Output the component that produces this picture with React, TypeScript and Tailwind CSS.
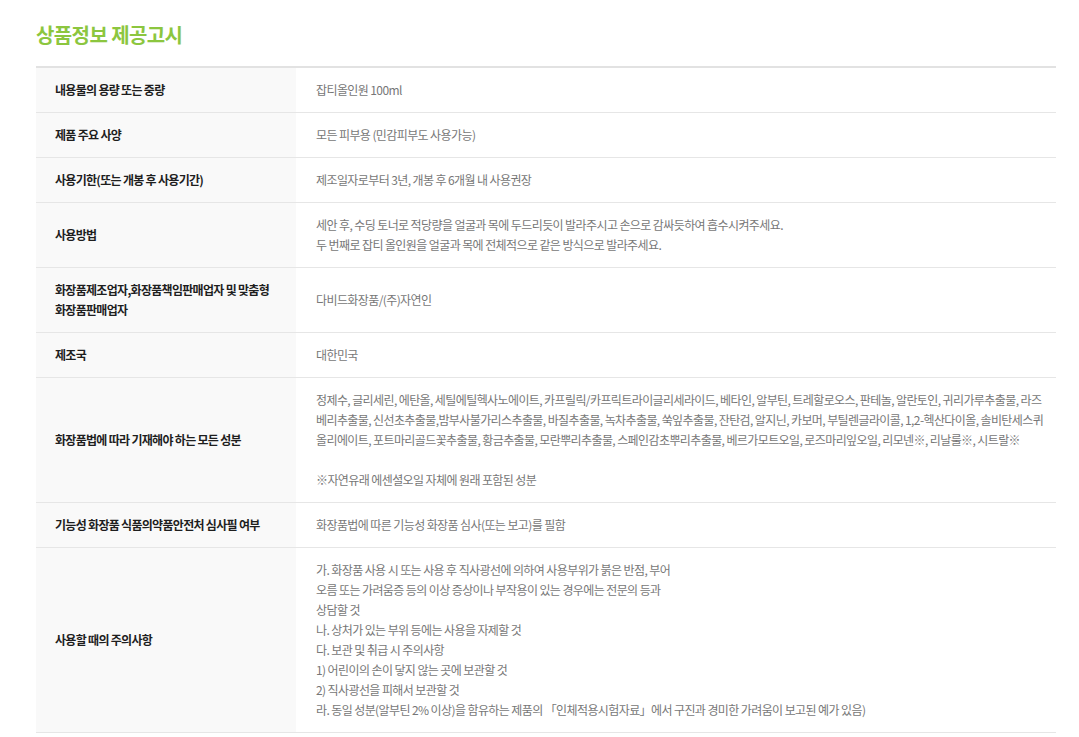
import type { ReactNode } from "react";

type Row = { label: ReactNode; value: ReactNode };

const rows: Row[] = [
  { label: "내용물의 용량 또는 중량", value: "잡티올인원 100ml" },
  { label: "제품 주요 사양", value: "모든 피부용 (민감피부도 사용가능)" },
  { label: "사용기한(또는 개봉 후 사용기간)", value: "제조일자로부터 3년, 개봉 후 6개월 내 사용권장" },
  {
    label: "사용방법",
    value: (
      <>
        세안 후, 수딩 토너로 적당량을 얼굴과 목에 두드리듯이 발라주시고 손으로 감싸듯하여 흡수시켜주세요.
        <br />
        두 번째로 잡티 올인원을 얼굴과 목에 전체적으로 같은 방식으로 발라주세요.
      </>
    ),
  },
  {
    label: (
      <>
        화장품제조업자,화장품책임판매업자 및 맞춤형
        <br />
        화장품판매업자
      </>
    ),
    value: "다비드화장품/(주)자연인",
  },
  { label: "제조국", value: "대한민국" },
  {
    label: "화장품법에 따라 기재해야 하는 모든 성분",
    value: (
      <>
        정제수, 글리세린, 에탄올, 세틸에틸헥사노에이트, 카프릴릭/카프릭트라이글리세라이드, 베타인, 알부틴, 트레할로오스, 판테놀, 알란토인, 귀리가루추출물, 라즈
        <br />
        베리추출물, 신선초추출물,밤부사불가리스추출물, 바질추출물, 녹차추출물, 쑥잎추출물, 잔탄검, 알지닌, 카보머, 부틸렌글라이콜, 1,2-헥산다이올, 솔비탄세스퀴
        <br />
        올리에이트, 포트마리골드꽃추출물, 황금추출물, 모란뿌리추출물, 스페인감초뿌리추출물, 베르가모트오일, 로즈마리잎오일, 리모넨※, 리날룰※, 시트랄※
        <br />
        <br />
        ※자연유래 에센셜오일 자체에 원래 포함된 성분
      </>
    ),
  },
  {
    label: "기능성 화장품 식품의약품안전처 심사필 여부",
    value: "화장품법에 따른 기능성 화장품 심사(또는 보고)를 필함",
  },
  {
    label: "사용할 때의 주의사항",
    value: (
      <>
        가. 화장품 사용 시 또는 사용 후 직사광선에 의하여 사용부위가 붉은 반점, 부어
        <br />
        오름 또는 가려움증 등의 이상 증상이나 부작용이 있는 경우에는 전문의 등과
        <br />
        상담할 것
        <br />
        나. 상처가 있는 부위 등에는 사용을 자제할 것
        <br />
        다. 보관 및 취급 시 주의사항
        <br />
        1) 어린이의 손이 닿지 않는 곳에 보관할 것
        <br />
        2) 직사광선을 피해서 보관할 것
        <br />
        라. 동일 성분(알부틴 2% 이상)을 함유하는 제품의 「인체적용시험자료」에서 구진과 경미한 가려움이 보고된 예가 있음)
      </>
    ),
  },
];

export default function App() {
  return (
    <div
      className="min-h-[737px] bg-white pl-[36px] pt-[20px]"
      style={{ fontFamily: '"Noto Sans CJK KR", "Noto Sans", sans-serif' }}
    >
      <h2 className="mb-[16px] text-[20px] font-bold leading-[30px] tracking-[-0.6px] text-[#8cc63f]">
        상품정보 제공고시
      </h2>

      <div className="w-[1020px] border-t-2 border-[#e2e2e2]">
        {rows.map((row, i) => (
          <div key={i} className="flex border-b border-[#e6e6e6]">
            <div className="flex w-[260px] shrink-0 items-center bg-[#f9f9f9] px-[19px] py-[12px] text-[12px] font-bold leading-[20px] tracking-[-0.7px] text-[#1e1e1e]">
              <div>{row.label}</div>
            </div>
            <div className="flex flex-1 items-center px-[20px] py-[12px] text-[12px] leading-[20px] tracking-[-0.6px] text-[#777] whitespace-nowrap">
              <div>{row.value}</div>
            </div>
          </div>
        ))}
      </div>
    </div>
  );
}
